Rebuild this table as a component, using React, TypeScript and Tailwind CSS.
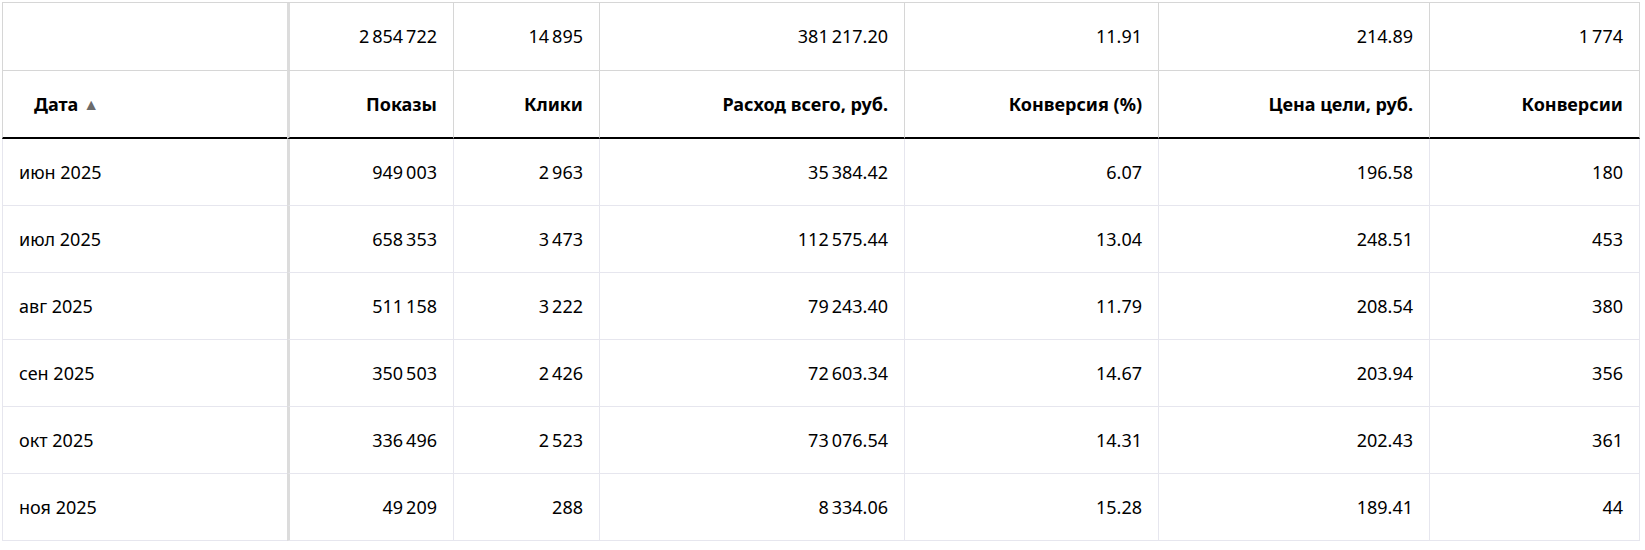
const NB = "\u202F";

type Row = {
  date: string;
  values: string[];
};

const totals = [`2${NB}854${NB}722`, `14${NB}895`, `381${NB}217.20`, "11.91", "214.89", `1${NB}774`];

const headers = ["Показы", "Клики", "Расход всего, руб.", "Конверсия (%)", "Цена цели, руб.", "Конверсии"];

const rows: Row[] = [
  { date: "июн 2025", values: [`949${NB}003`, `2${NB}963`, `35${NB}384.42`, "6.07", "196.58", "180"] },
  { date: "июл 2025", values: [`658${NB}353`, `3${NB}473`, `112${NB}575.44`, "13.04", "248.51", "453"] },
  { date: "авг 2025", values: [`511${NB}158`, `3${NB}222`, `79${NB}243.40`, "11.79", "208.54", "380"] },
  { date: "сен 2025", values: [`350${NB}503`, `2${NB}426`, `72${NB}603.34`, "14.67", "203.94", "356"] },
  { date: "окт 2025", values: [`336${NB}496`, `2${NB}523`, `73${NB}076.54`, "14.31", "202.43", "361"] },
  { date: "ноя 2025", values: [`49${NB}209`, "288", `8${NB}334.06`, "15.28", "189.41", "44"] },
];

// numeric cells; the first one after the date column carries the thick divider
function NumCells({ values, line, bottom }: { values: string[]; line: string; bottom: string }) {
  return (
    <>
      {values.map((v, i) => (
        <div
          key={i}
          className={`flex items-center justify-end pr-4 whitespace-nowrap ${bottom} ${
            i === 0 ? "border-l-[3px] border-l-[#dcdcdc]" : `border-l ${line}`
          } ${i === values.length - 1 ? `border-r ${line}` : ""}`}
        >
          {v}
        </div>
      ))}
    </>
  );
}

export default function App() {
  return (
    <div className="w-[1645px] h-[550px] bg-white pt-[2px] pl-[2px] text-[18px] text-black [font-family:'Noto_Sans',sans-serif]">
      <div className="grid w-[1638px] grid-cols-[285px_166px_146px_305px_254px_271px_211px] grid-rows-[68px_68px_repeat(6,67px)] border-t border-[#d6d6d6]">
        {/* totals */}
        <div className="border-l border-b border-[#d6d6d6]" />
        <NumCells values={totals} line="border-[#d6d6d6]" bottom="border-b border-b-[#d6d6d6]" />

        {/* header */}
        <div className="flex items-center pl-[31px] font-bold border-l border-[#d6d6d6] border-b-2 border-b-black">
          Дата
          <span className="ml-[5px] text-[16px] leading-none font-normal text-[#6b6b6b]">▲</span>
        </div>
        <NumCells values={headers} line="border-[#d6d6d6]" bottom="border-b-2 border-b-black font-bold" />

        {/* body */}
        {rows.map((r) => (
          <div key={r.date} className="contents">
            <div className="flex items-center pl-4 border-l border-b border-[#e6e6ee]">{r.date}</div>
            <NumCells values={r.values} line="border-[#e6e6ee]" bottom="border-b border-b-[#e6e6ee]" />
          </div>
        ))}
      </div>
    </div>
  );
}
